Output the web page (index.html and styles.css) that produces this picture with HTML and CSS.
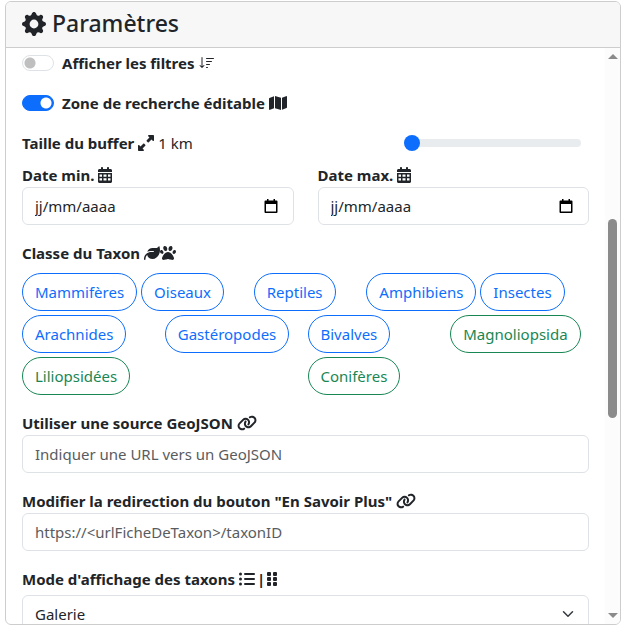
FILE: index.html
```html
<!DOCTYPE html>
<html lang="fr">
<head>
<meta charset="utf-8">
<meta name="viewport" content="width=device-width, initial-scale=1">
<title>Paramètres</title>
<link rel="stylesheet" href="styles.css">
</head>
<body>
<svg class="sprite" aria-hidden="true">
  <symbol id="calendar" viewBox="0 0 448 512"><path fill-rule="evenodd" d="M96 32V64H48C21.5 64 0 85.500 0 112v48H448V112c0-26.500-21.500-48-48-48H352V32c0-17.700-14.300-32-32-32s-32 14.300-32 32V64H160V32c0-17.700-14.300-32-32-32S96 14.300 96 32zM448 192H0V464c0 26.500 21.500 48 48 48H400c26.500 0 48-21.500 48-48V192zM48 240h80v72H48zM176 240h96v72h-96zM320 240h80v72h-80zM48 360h80v72H48zM176 360h96v72h-96zM320 360h80v72h-80z"/></symbol>
  <symbol id="link" viewBox="0 0 640 512"><path d="M579.8 267.7c56.5-56.5 56.5-148 0-204.5c-50-50-128.800-56.500-186.300-15.400l-1.600 1.100c-14.400 10.300-17.700 30.300-7.400 44.600s30.300 17.700 44.600 7.400l1.600-1.100c32.100-22.900 76-19.300 103.800 8.600c31.500 31.500 31.500 82.500 0 114L422.300 334.800c-31.500 31.500-82.500 31.500-114 0c-27.900-27.900-31.500-71.800-8.600-103.800l1.100-1.600c10.300-14.400 6.900-34.400-7.400-44.600s-34.400-6.900-44.600 7.400l-1.100 1.600C206.500 251.200 213 330 263 380c56.500 56.500 148 56.500 204.500 0L579.800 267.700zM60.200 244.300c-56.500 56.500-56.500 148 0 204.500c50 50 128.800 56.500 186.300 15.400l1.600-1.100c14.400-10.300 17.700-30.300 7.400-44.600s-30.300-17.700-44.600-7.400l-1.600 1.100c-32.100 22.900-76 19.300-103.800-8.600C74 372 74 321 105.500 289.500L217.700 177.200c31.500-31.500 82.500-31.500 114 0c27.900 27.900 31.500 71.800 8.600 103.900l-1.100 1.600c-10.300 14.400-6.900 34.400 7.400 44.600s34.400 6.900 44.600-7.400l1.100-1.600C433.500 260.800 427 182 377 132c-56.500-56.500-148-56.500-204.500 0L60.200 244.300z"/></symbol>
  <symbol id="picker" viewBox="0 0 14 15"><path fill-rule="evenodd" d="M3 0h1.500v1.500h5V0H11v1.500h1.500a1 1 0 0 1 1 1V13a1 1 0 0 1-1 1h-11a1 1 0 0 1-1-1V2.500a1 1 0 0 1 1-1H3zM2 5v7.500h10V5z"/></symbol>
</svg>

<main class="card">
  <header class="card-header">
    <svg class="gear" viewBox="0 0 16 16" aria-hidden="true"><path d="M9.405 1.050c-.413-1.400-2.397-1.400-2.810 0l-.1.340a1.464 1.464 0 0 1-2.105.872l-.31-.17c-1.283-.698-2.686.705-1.987 1.987l.169.311c.446.82.023 1.841-.872 2.105l-.34.1c-1.400.413-1.400 2.397 0 2.810l.34.1a1.464 1.464 0 0 1 .872 2.105l-.17.31c-.698 1.283.705 2.686 1.987 1.987l.311-.169a1.464 1.464 0 0 1 2.105.872l.1.340c.413 1.400 2.397 1.400 2.810 0l.1-.34a1.464 1.464 0 0 1 2.105-.872l.31.17c1.283.698 2.686-.705 1.987-1.987l-.169-.311a1.464 1.464 0 0 1 .872-2.105l.34-.1c1.400-.413 1.400-2.397 0-2.810l-.34-.1a1.464 1.464 0 0 1-.872-2.105l.17-.31c.698-1.283-.705-2.686-1.987-1.987l-.311.169a1.464 1.464 0 0 1-2.105-.872l-.1-.34zM8 10.930a2.929 2.929 0 1 1 0-5.860 2.929 2.929 0 0 1 0 5.858z"/></svg>
    <h1 class="title">Paramètres</h1>
  </header>

  <div class="card-main">
    <form class="settings">
      <div class="row">
        <input class="switch" type="checkbox" role="switch" id="filters">
        <label class="label" for="filters">Afficher les filtres
          <svg class="icon" viewBox="0 0 16 16" aria-hidden="true"><path d="M3.500 2.500a.5.5 0 0 0-1 0v8.793l-1.146-1.147a.5.5 0 0 0-.708.708l2 1.999.007.007a.497.497 0 0 0 .7-.006l2-2a.5.5 0 0 0-.707-.708L3.500 11.293V2.500zm3.500 1a.5.5 0 0 1 .5-.5h7a.5.5 0 0 1 0 1h-7a.5.5 0 0 1-.5-.5zM7.500 6a.5.5 0 0 0 0 1h5a.5.5 0 0 0 0-1h-5zm0 3a.5.5 0 0 0 0 1h3a.5.5 0 0 0 0-1h-3zm0 3a.5.5 0 0 0 0 1h1a.5.5 0 0 0 0-1h-1z"/></svg>
        </label>
      </div>

      <div class="row">
        <input class="switch" type="checkbox" role="switch" id="zone" checked>
        <label class="label" for="zone">Zone de recherche éditable
          <svg class="icon icon-map" viewBox="0 0 576 512" aria-hidden="true"><path d="M384 476.100L192 421.200V35.900L384 90.800V476.100zm32-1.200V88.400L543.100 37.500c15.800-6.300 32.900 5.300 32.900 22.300V394.600c0 9.800-6 18.600-15.100 22.300L416 474.800zM15.100 95.100L160 37.200V423.600L32.900 474.500C17.100 480.800 0 469.200 0 452.200V117.400c0-9.800 6-18.600 15.100-22.300z"/></svg>
        </label>
      </div>

      <div class="row buffer">
        <label class="label" for="buffer">Taille du buffer
          <svg class="icon" viewBox="0 0 512 512" aria-hidden="true"><path d="M344 0H488c13.300 0 24 10.700 24 24V168c0 9.700-5.800 18.500-14.800 22.200s-19.300 1.700-26.200-5.200l-39-39-87 87c-9.400 9.400-24.600 9.400-33.900 0l-32-32c-9.400-9.400-9.400-24.600 0-33.900l87-87L327 41c-6.900-6.900-8.900-17.200-5.200-26.200S334.300 0 344 0zM168 512H24c-13.300 0-24-10.700-24-24V344c0-9.700 5.800-18.500 14.800-22.200s19.300-1.700 26.200 5.200l39 39 87-87c9.400-9.400 24.600-9.400 33.900 0l32 32c9.400 9.400 9.400 24.600 0 33.900l-87 87 39 39c6.900 6.900 8.900 17.200 5.200 26.200s-12.500 14.800-22.200 14.800z"/></svg>
        </label>
        <output class="value" for="buffer">1 km</output>
        <input class="range" type="range" id="buffer" min="1" max="100" value="1">
      </div>

      <div class="dates">
        <div class="field">
          <label class="label" for="date-min">Date min. <svg class="icon icon-calendar" aria-hidden="true"><use href="#calendar"/></svg></label>
          <div class="control date">
            <input class="input" type="text" id="date-min" placeholder="jj/mm/aaaa">
            <svg class="picker" aria-hidden="true"><use href="#picker"/></svg>
          </div>
        </div>
        <div class="field">
          <label class="label" for="date-max">Date max. <svg class="icon icon-calendar" aria-hidden="true"><use href="#calendar"/></svg></label>
          <div class="control date">
            <input class="input" type="text" id="date-max" placeholder="jj/mm/aaaa">
            <svg class="picker" aria-hidden="true"><use href="#picker"/></svg>
          </div>
        </div>
      </div>

      <div class="field" role="group" aria-labelledby="taxon">
        <div class="label" id="taxon">Classe du Taxon
          <span class="icons"><svg class="icon" viewBox="0 0 512 512" aria-hidden="true"><path d="M272 96c-78.600 0-145.100 51.500-167.700 122.500c33.600-17 71.500-26.500 111.700-26.500h88c8.800 0 16 7.200 16 16s-7.200 16-16 16H216c-16.600 0-32.700 1.900-48.300 5.400c-25.900 5.900-49.900 16.400-71.400 30.700C38.300 298.800 0 364.900 0 440v16c0 13.300 10.700 24 24 24s24-10.700 24-24V440c0-48.700 20.700-92.500 53.800-123.200C121.600 392.300 190.300 448 272 448l1 0c132.100-.7 239-130.900 239-291.400c0-42.600-7.500-83.100-21.100-119.600c-2.600-6.900-12.700-6.600-16.200-.1C455.900 72.100 418.700 96 376 96L272 96z"/></svg><svg class="icon" viewBox="0 0 512 512" aria-hidden="true"><path d="M226.500 92.900c14.300 42.900-.3 86.200-32.600 96.800s-70.100-15.600-84.400-58.500s.3-86.200 32.600-96.800s70.100 15.600 84.400 58.500zM100.400 198.600c18.900 32.400 14.300 70.100-10.200 84.100s-59.700-.9-78.500-33.300S-2.700 179.300 21.800 165.300s59.700 .9 78.500 33.300zM69.200 401.200C121.600 259.900 214.700 224 256 224s134.400 35.900 186.800 177.200c3.600 9.700 5.200 20.100 5.200 30.500v1.600c0 25.800-20.900 46.700-46.700 46.700c-11.500 0-22.900-1.400-34-4.200l-88-22c-15.300-3.800-31.300-3.800-46.600 0l-88 22c-11.100 2.800-22.500 4.200-34 4.200C84.900 480 64 459.100 64 433.300v-1.600c0-10.400 1.600-20.800 5.200-30.500zM421.800 282.700c-24.500-14-29.100-51.700-10.200-84.100s54-47.300 78.500-33.300s29.100 51.700 10.200 84.100s-54 47.300-78.500 33.300zM310.100 189.700c-32.300-10.600-46.900-53.900-32.600-96.800s52.100-69.100 84.400-58.500s46.900 53.900 32.600 96.800s-52.100 69.100-84.400 58.500z"/></svg></span>
        </div>
        <div class="taxa">
          <div class="taxa-row">
            <div class="taxa-col"><button class="pill" type="button">Mammifères</button></div>
            <div class="taxa-col"><button class="pill" type="button">Oiseaux</button></div>
            <div class="taxa-col"><button class="pill" type="button">Reptiles</button></div>
            <div class="taxa-col"><button class="pill" type="button">Amphibiens</button></div>
            <div class="taxa-col"><button class="pill" type="button">Insectes</button></div>
          </div>
          <div class="taxa-row">
            <div class="taxa-col"><button class="pill" type="button">Arachnides</button></div>
            <div class="taxa-col"><button class="pill" type="button">Gastéropodes</button></div>
            <div class="taxa-col"><button class="pill" type="button">Bivalves</button></div>
            <div class="taxa-col"><button class="pill plant" type="button">Magnoliopsida</button></div>
          </div>
          <div class="taxa-row">
            <div class="taxa-col"><button class="pill plant" type="button">Liliopsidées</button></div>
            <div class="taxa-col"><button class="pill plant" type="button">Conifères</button></div>
          </div>
        </div>
      </div>

      <div class="field">
        <label class="label" for="geojson">Utiliser une source GeoJSON <svg class="icon icon-link" aria-hidden="true"><use href="#link"/></svg></label>
        <input class="input" type="text" id="geojson" placeholder="Indiquer une URL vers un GeoJSON">
      </div>

      <div class="field">
        <label class="label" for="redirect">Modifier la redirection du bouton "En Savoir Plus" <svg class="icon icon-link" aria-hidden="true"><use href="#link"/></svg></label>
        <input class="input" type="text" id="redirect" placeholder="https://&lt;urlFicheDeTaxon&gt;/taxonID">
      </div>

      <div class="field field-mode">
        <label class="label" for="mode">Mode d'affichage des taxons
          <span class="icons mode-icons"><svg class="icon" viewBox="0 0 16 16" aria-hidden="true"><circle cx="1.500" cy="3" r="1.500"/><circle cx="1.500" cy="8" r="1.500"/><circle cx="1.500" cy="13" r="1.500"/><rect x="5" y="2" width="11" height="2" rx="1"/><rect x="5" y="7" width="11" height="2" rx="1"/><rect x="5" y="12" width="11" height="2" rx="1"/></svg>|<svg class="icon icon-grip" viewBox="0 0 10 16" aria-hidden="true"><rect y="1" width="4" height="4" rx="1"/><rect y="6" width="4" height="4" rx="1"/><rect y="11" width="4" height="4" rx="1"/><rect x="6" y="1" width="4" height="4" rx="1"/><rect x="6" y="6" width="4" height="4" rx="1"/><rect x="6" y="11" width="4" height="4" rx="1"/></svg></span>
        </label>
        <div class="control">
          <select class="input select" id="mode"><option>Galerie</option><option>Liste</option></select>
          <svg class="chevron" viewBox="0 0 16 16" aria-hidden="true"><path d="m2 5 6 6 6-6"/></svg>
        </div>
      </div>
    </form>

    <div class="scrollbar" aria-hidden="true">
      <span class="arrow arrow-up"></span>
      <span class="track-before"></span>
      <span class="thumb"></span>
      <span class="track-after"></span>
      <span class="arrow arrow-down"></span>
    </div>
  </div>
</main>
</body>
</html>
```
FILE: styles.css
```css
* { box-sizing: border-box; }

body {
  margin: 0;
  height: 100vh;
  padding: 1px 10px 7px 5px;
  display: flex;
  background: #fff;
  color: #212529;
  font: 400 15px/24px "Noto Sans", "Liberation Sans", sans-serif;
}

.sprite { position: absolute; width: 0; height: 0; }

.card {
  flex: 1;
  min-width: 0;
  display: flex;
  flex-direction: column;
  border: 1px solid #cdcdcd;
  border-radius: 6px;
  overflow: hidden;
}

.card-header {
  flex: none;
  display: flex;
  align-items: center;
  gap: 6px;
  padding: 7px 16px 9px;
  background: #f7f7f7;
  border-bottom: 1px solid #cdcdcd;
}

.gear { width: 24px; height: 24px; fill: #212529; }

.title { margin: 0; font-size: 23px; line-height: 29px; font-weight: 500; }

.card-main { flex: 1; min-height: 0; display: flex; }

.settings {
  flex: 1;
  min-width: 0;
  overflow: hidden;
  display: flex;
  flex-direction: column;
  gap: 16px;
  padding: 3px 16px 0;
}

.settings > * { flex: none; }

.row { display: flex; align-items: center; gap: 8px; }

.label { display: flex; align-items: center; gap: 4px; height: 24px; font-weight: 700; white-space: nowrap; }

.icon { flex: none; width: 16px; height: 16px; fill: #212529; }
.icon-map { width: 18px; }
.icon-calendar { width: 14px; }
.icon-link { width: 20px; }
.icon-grip { width: 10px; }
.icons { display: flex; align-items: center; }
.mode-icons { gap: 2px; }

.switch {
  appearance: none;
  flex: none;
  width: 32px;
  height: 16px;
  margin: 0;
  border: 1px solid #dee2e6;
  border-radius: 8px;
  background: radial-gradient(circle at 7px 7px, #bfbfbf 5px, transparent 6px) #fff;
}
.switch:checked {
  border-color: #0d6efd;
  background: radial-gradient(circle at 23px 7px, #fff 5px, transparent 6px) #0d6efd;
}

.buffer { gap: 4px; margin-bottom: -8px; }

.range {
  appearance: none;
  width: 177px;
  height: 24px;
  margin: 0 8px 0 auto;
  background: transparent;
}
.range::-webkit-slider-runnable-track { height: 8px; border-radius: 8px; background: #e9ecef; }
.range::-webkit-slider-thumb {
  appearance: none;
  width: 16px;
  height: 16px;
  margin-top: -4px;
  border-radius: 50%;
  background: #0d6efd;
}

.dates { display: grid; grid-template-columns: 1fr 1fr; gap: 24px; }

.control { position: relative; }

.input {
  display: block;
  width: 100%;
  height: 38px;
  padding: 6px 12px;
  border: 1px solid #dee2e6;
  border-radius: 6px;
  background: #fff;
  color: #212529;
  font: inherit;
}
.input::placeholder { color: #595c5f; opacity: 1; }
.date .input::placeholder { color: #212529; }

.picker { position: absolute; right: 16px; top: 12px; width: 14px; height: 15px; fill: #000; }

.select { appearance: none; }
.chevron {
  position: absolute;
  right: 15px;
  top: 13px;
  width: 12px;
  height: 12px;
  fill: none;
  stroke: #343a40;
  stroke-width: 2;
  stroke-linecap: round;
  stroke-linejoin: round;
}

.taxa { display: flex; flex-direction: column; gap: 4px; margin: 8px -4px 0 0; }
.taxa-row { display: flex; }
.taxa-col { flex: 1 0 0; padding-right: 4px; }

.pill {
  display: block;
  height: 38px;
  padding: 6px 12px;
  border: 1px solid #0d6efd;
  border-radius: 19px;
  background: #fff;
  color: #0d6efd;
  font: inherit;
  white-space: nowrap;
}
.plant { border-color: #198754; color: #198754; }

.field-mode .label { margin-bottom: 4px; }

.scrollbar {
  flex: none;
  width: 15px;
  display: flex;
  flex-direction: column;
  align-items: center;
  padding: 6px 0;
  background: #fcfcfc;
}
.arrow { border: 5px solid transparent; }
.arrow-up { border-top: 0; border-bottom-color: #8b8b8b; }
.arrow-down { border-bottom: 0; border-top-color: #8b8b8b; }
.track-before { flex: 160; }
.thumb { flex: 199; width: 9px; border-radius: 5px; background: #8b8b8b; }
.track-after { flex: 195; }
```
